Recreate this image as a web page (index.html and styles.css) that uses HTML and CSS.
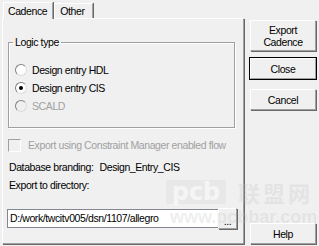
FILE: index.html
```html
<!DOCTYPE html>
<html lang="en">

<head>
  <meta charset="UTF-8">
  <title>Export Cadence</title>
  <link rel="stylesheet" href="styles.css">
</head>

<body>
  <div class="dialog">
    <div class="tabs-col">
      <div class="tab-strip">
        <div class="tab active">Cadence</div>
        <div class="tab">Other</div>
      </div>
      <div class="tab-panel">
        <fieldset class="group">
          <legend>Logic type</legend>
          <div class="option"><span class="radio"></span>Design entry HDL</div>
          <div class="option"><span class="radio checked"></span>Design entry CIS</div>
          <div class="option disabled"><span class="radio"></span>SCALD</div>
        </fieldset>

        <div class="option check-row disabled"><span class="checkbox"></span>Export using Constraint Manager enabled flow</div>

        <div class="info-row first">
          <span class="info-label">Database branding:</span>
          <span>Design_Entry_CIS</span>
        </div>
        <div class="info-row">Export to directory:</div>

        <div class="dir-row">
          <div class="dir-input">D:/work/twcitv005/dsn/1107/allegro</div>
          <div class="btn browse">...</div>
        </div>
      </div>
    </div>

    <div class="buttons-col">
      <div class="btn tall">Export<br>Cadence</div>
      <div class="btn focused">Close</div>
      <div class="btn">Cancel</div>
      <div class="spacer"></div>
      <div class="btn">Help</div>
    </div>
  </div>

  <!-- site watermark over the screenshot -->
  <div class="watermark">
    <div class="wm-top">
      <span class="wm-pcb">pcb</span>
      <span class="wm-cn">联盟网</span>
    </div>
    <div class="wm-url">www.pcbbar.com</div>
  </div>
</body>

</html>
```

FILE: styles.css
```css
body {
  margin: 0;
  width: 319px;
  height: 246px;
  background: #f0f0f0;
  font-family: 'Liberation Sans', Arial, sans-serif;
  font-size: 10.5px;
  letter-spacing: -0.4px;
  color: #000;
  position: relative;
  overflow: hidden;
}

.dialog {
  display: flex;
  padding: 2px 0 0 2px;
}

.tabs-col {
  width: 242px;
  display: flex;
  flex-direction: column;
}

.tab-strip {
  display: flex;
  align-items: flex-end;
  height: 16px;
  padding-left: 1px;
}

.tab {
  height: 14px;
  line-height: 14px;
  padding: 0 7px 0 5px;
  border-top: 1px solid #fff;
  border-left: 1px solid #fff;
  border-right: 1px solid #a0a0a0;
  box-shadow: 1px 0 0 #696969;
}

.tab.active {
  height: 16px;
  line-height: 16px;
  padding: 0 5px 0 4px;
  margin-right: 1px;
  position: relative;
  z-index: 1;
  background: #f0f0f0;
  margin-bottom: -1px;
}

.tab-panel {
  height: 224px;
  border-top: 1px solid #fff;
  border-left: 1px solid #fff;
  border-right: 1px solid #a0a0a0;
  border-bottom: 1px solid #a0a0a0;
  box-shadow: 1px 1px 0 #696969;
  padding: 0 4px 0 4px;
}

.group {
  margin: 17px 4px 0 1px;
  padding: 12px 0 12px 6px;
  border: 1px solid #a0a0a0;
  box-shadow: 1px 1px 0 #fff, inset 1px 1px 0 #fff;
}

.group legend {
  margin-left: -2px;
  padding: 0 2px;
  line-height: 13px;
}

.option {
  display: flex;
  align-items: center;
  height: 18px;
  white-space: nowrap;
}

.option.disabled {
  color: #a0a0a0;
}

.radio {
  width: 10px;
  height: 10px;
  border-radius: 50%;
  border: 1px solid #808080;
  border-right-color: #dcdcdc;
  border-bottom-color: #dcdcdc;
  background: #fff;
  margin-right: 5px;
  display: flex;
  align-items: center;
  justify-content: center;
}

.option.disabled .radio {
  background: #f0f0f0;
}

.radio.checked::after {
  content: '';
  width: 4px;
  height: 4px;
  border-radius: 50%;
  background: #000;
}

.check-row {
  margin-top: 8px;
  padding-left: 1px;
}

.checkbox {
  width: 11px;
  height: 11px;
  border: 1px solid #a0a0a0;
  border-right-color: #fff;
  border-bottom-color: #fff;
  margin-right: 7px;
}

.info-row {
  height: 18px;
  line-height: 18px;
  padding-left: 2px;
  white-space: nowrap;
}

.info-row.first {
  margin-top: 4px;
}

.info-label {
  display: inline-block;
  width: 88px;
}

.dir-row {
  display: flex;
  align-items: center;
  margin-top: 14px;
}

.dir-input {
  width: 210px;
  height: 17px;
  line-height: 17px;
  padding-left: 2px;
  background: #fff;
  border: 1px solid #828790;
  white-space: nowrap;
  overflow: hidden;
}

.btn {
  display: flex;
  align-items: center;
  justify-content: center;
  text-align: center;
  width: 64px;
  height: 19px;
  line-height: 12px;
  background: #f0f0f0;
  border-top: 1px solid #fff;
  border-left: 1px solid #fff;
  border-right: 1px solid #a0a0a0;
  border-bottom: 1px solid #a0a0a0;
  box-shadow: 1px 1px 0 #696969;
}

.btn.browse {
  width: 17px;
  height: 19px;
  margin-left: -3px;
  align-items: flex-end;
  line-height: 14px;
}

.buttons-col {
  display: flex;
  flex-direction: column;
  padding: 18px 0 0 6px;
  height: 224px;
}

.btn.tall {
  height: 29px;
  margin-bottom: 7px;
}

.btn.focused {
  outline: 1px solid #000;
  margin-bottom: 10px;
}

.spacer {
  flex: 1;
}

.watermark {
  position: absolute;
  left: 166px;
  top: 179px;
  width: 150px;
  pointer-events: none;
  letter-spacing: 0;
  font-weight: bold;
}

.wm-top {
  display: flex;
  align-items: center;
  height: 26px;
}

.wm-pcb {
  width: 60px;
  height: 24px;
  line-height: 24px;
  text-align: center;
  font-family: 'DejaVu Sans', sans-serif;
  font-size: 24px;
  color: rgba(255, 255, 255, 0.6);
  background: rgba(200, 200, 200, 0.18);
}

.wm-cn {
  margin-left: 12px;
  font-size: 22px;
  line-height: 24px;
  letter-spacing: 3px;
  font-family: 'Noto Sans CJK SC', sans-serif;
  color: rgba(190, 190, 190, 0.25);
}

.wm-url {
  margin: 2px 0 0 4px;
  font-family: 'Liberation Sans', sans-serif;
  font-size: 18px;
  line-height: 20px;
  color: rgba(190, 190, 190, 0.25);
}
```
